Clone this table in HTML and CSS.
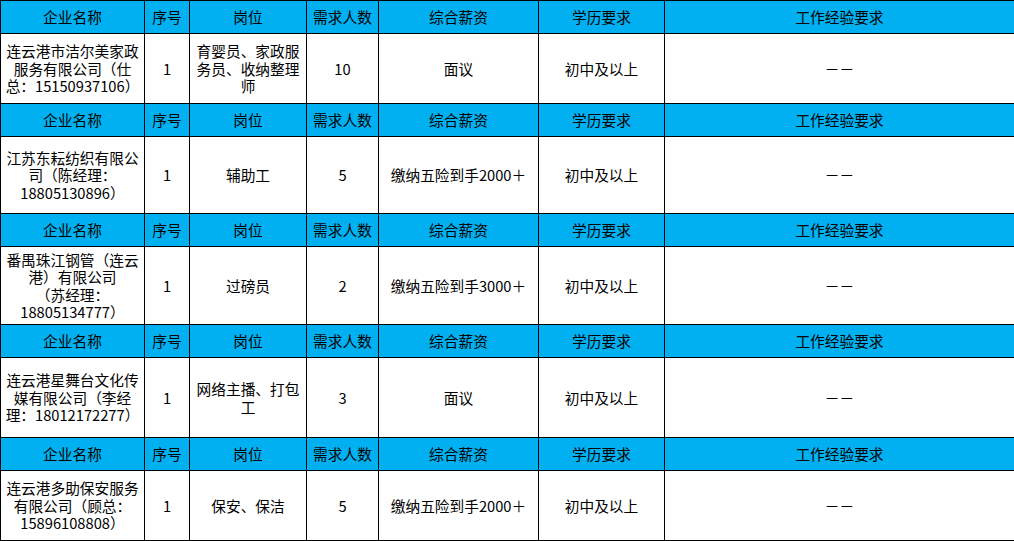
FILE: index.html
```html
<!DOCTYPE html>
<html lang="zh-CN">
<head>
<meta charset="utf-8">
<title>招聘信息</title>
<link rel="stylesheet" href="styles.css">
</head>
<body>
<table class="jobs">
  <colgroup>
    <col class="c-name"><col class="c-no"><col class="c-pos"><col class="c-num"><col class="c-pay"><col class="c-edu"><col class="c-exp">
  </colgroup>
  <tbody>
    <tr class="head">
      <td>企业名称</td><td>序号</td><td>岗位</td><td>需求人数</td><td>综合薪资</td><td>学历要求</td><td>工作经验要求</td>
    </tr>
    <tr class="row r70">
      <td>连云港市洁尔美家政<br>服务有限公司（仕<br>总：15150937106）</td><td>1</td><td>育婴员、家政服<br>务员、收纳整理<br>师</td><td>10</td><td>面议</td><td>初中及以上</td><td>－－</td>
    </tr>
    <tr class="head">
      <td>企业名称</td><td>序号</td><td>岗位</td><td>需求人数</td><td>综合薪资</td><td>学历要求</td><td>工作经验要求</td>
    </tr>
    <tr class="row r77">
      <td>江苏东耘纺织有限公<br>司（陈经理：<br>18805130896）</td><td>1</td><td>辅助工</td><td>5</td><td>缴纳五险到手2000＋</td><td>初中及以上</td><td>－－</td>
    </tr>
    <tr class="head">
      <td>企业名称</td><td>序号</td><td>岗位</td><td>需求人数</td><td>综合薪资</td><td>学历要求</td><td>工作经验要求</td>
    </tr>
    <tr class="row r78">
      <td>番禺珠江钢管（连云<br>港）有限公司<br>（苏经理：<br>18805134777）</td><td>1</td><td>过磅员</td><td>2</td><td>缴纳五险到手3000＋</td><td>初中及以上</td><td>－－</td>
    </tr>
    <tr class="head">
      <td>企业名称</td><td>序号</td><td>岗位</td><td>需求人数</td><td>综合薪资</td><td>学历要求</td><td>工作经验要求</td>
    </tr>
    <tr class="row r80">
      <td>连云港星舞台文化传<br>媒有限公司（李经<br>理：18012172277）</td><td>1</td><td>网络主播、打包<br>工</td><td>3</td><td>面议</td><td>初中及以上</td><td>－－</td>
    </tr>
    <tr class="head">
      <td>企业名称</td><td>序号</td><td>岗位</td><td>需求人数</td><td>综合薪资</td><td>学历要求</td><td>工作经验要求</td>
    </tr>
    <tr class="row r70">
      <td>连云港多助保安服务<br>有限公司（顾总：<br>15896108808）</td><td>1</td><td>保安、保洁</td><td>5</td><td>缴纳五险到手2000＋</td><td>初中及以上</td><td>－－</td>
    </tr>
  </tbody>
</table>
</body>
</html>
```
FILE: styles.css
```css
html, body {
  margin: 0;
  padding: 0;
  background: #ffffff;
}

.jobs {
  border-collapse: collapse;
  table-layout: fixed;
  width: 1014px;
  font-family: "Noto Sans CJK SC", "Noto Sans", sans-serif;
  font-size: 14.7px;
  color: #000000;
}

.c-name { width: 144px; }
.c-no { width: 45px; }
.c-pos { width: 117px; }
.c-num { width: 72px; }
.c-pay { width: 160px; }
.c-edu { width: 126px; }
.c-exp { width: 350px; }

.jobs td {
  border: 1px solid #000000;
  padding: 0;
  text-align: center;
  vertical-align: middle;
  line-height: 17.5px;
  white-space: nowrap;
  overflow: hidden;
}

.head td {
  background: #00b0f0;
  height: 32px;
}

.r70 td { height: 69px; }
.r77 td { height: 76px; }
.r78 td { height: 77px; }
.r80 td { height: 79px; }
```
